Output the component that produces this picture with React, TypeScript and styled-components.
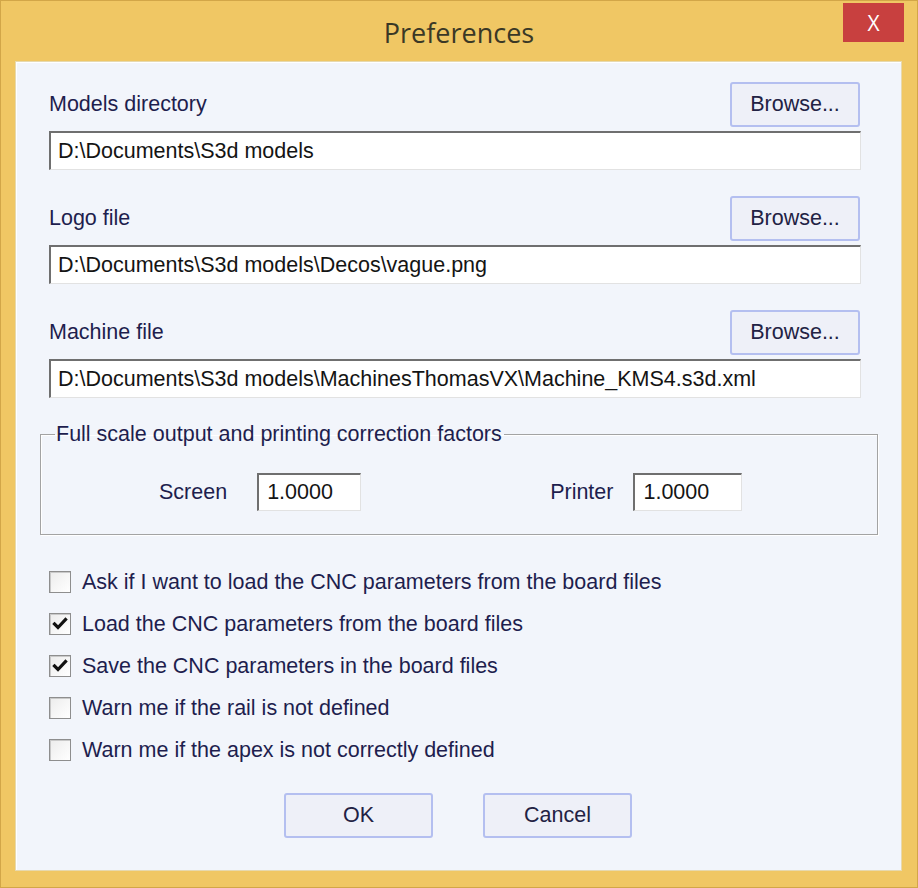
import React from 'react';
import styled, { createGlobalStyle } from 'styled-components';

const GlobalStyle = createGlobalStyle`
  html, body {
    margin: 0;
    padding: 0;
    background: #f0c764;
  }
  * {
    box-sizing: border-box;
  }
`;

const uiFont = `"Liberation Sans", Arial, sans-serif`;

const Window = styled.div`
  width: 918px;
  height: 888px;
  display: flex;
  flex-direction: column;
  background: #f0c764;
  border: 1px solid #d2a648;
  position: relative;
`;

const TitleBar = styled.div`
  height: 60px;
  display: flex;
  align-items: center;
  justify-content: center;
  flex-shrink: 0;
`;

const Title = styled.div`
  font-family: "Open Sans", "Liberation Sans", sans-serif;
  font-size: 27px;
  color: #3a3826;
  padding-top: 2px;
`;

const CloseButton = styled.div`
  position: absolute;
  top: 2px;
  right: 13px;
  width: 61px;
  height: 39px;
  background: #c8403f;
  color: #ffffff;
  display: flex;
  align-items: center;
  justify-content: center;
  font-family: "Open Sans", "Liberation Sans", sans-serif;
  font-size: 21px;
`;

const Client = styled.div`
  flex: 1;
  margin: 0 15px 16px 14px;
  background: #f2f5fb;
  border: 1px solid #e7d9ae;
  box-shadow: inset 1px 1px 0 #ffffff;
  padding: 20px 23px 0 24px;
  display: flex;
  flex-direction: column;
`;

const FileSection = styled.div<{ $after: number }>`
  padding: 0 17px 0 9px;
  display: flex;
  flex-direction: column;
  margin-bottom: ${(p) => p.$after}px;
`;

const FileHeader = styled.div`
  display: flex;
  align-items: center;
  justify-content: space-between;
  margin-bottom: 4px;
`;

const Label = styled.span`
  font-family: ${uiFont};
  font-size: 21.5px;
  color: #1e1e4e;
`;

const PushButton = styled.button<{ $w: number }>`
  width: ${(p) => p.$w}px;
  height: 45px;
  border: 2px solid #b4bff0;
  border-radius: 3px;
  background: #eef0f8;
  font-family: ${uiFont};
  font-size: 21.5px;
  color: #222244;
  padding: 0;
  margin-right: 1px;
`;

const TextBox = styled.div<{ $w?: number }>`
  height: 39px;
  width: ${(p) => (p.$w ? `${p.$w}px` : 'auto')};
  background: #ffffff;
  border-top: 2px solid #6f6f6f;
  border-left: 2px solid #6f6f6f;
  border-right: 1px solid #e2e2e2;
  border-bottom: 1px solid #e2e2e2;
  padding: 0 0 0 7px;
  display: flex;
  align-items: center;
  font-family: ${uiFont};
  font-size: 21.5px;
  color: #141414;
  white-space: nowrap;
  overflow: hidden;
`;

const GroupBox = styled.fieldset`
  margin: 0;
  border: 1px solid #a3a3a3;
  box-shadow: inset 1px 1px 0 #ffffff, 1px 1px 0 #ffffff;
  padding: 27px 0 23px 14px;
`;

const Legend = styled.legend`
  font-family: ${uiFont};
  font-size: 21.5px;
  color: #1e1e4e;
  padding: 0 2px 0 1px;
  line-height: 24px;
`;

const FactorRow = styled.div`
  display: flex;
  align-items: center;
  padding-left: 104px;
`;

const FactorLabel = styled(Label)<{ $gap: number; $lead?: number }>`
  margin-left: ${(p) => p.$lead ?? 0}px;
  margin-right: ${(p) => p.$gap}px;
`;

const FactorBox = styled(TextBox)`
  height: 38px;
  padding-left: 8px;
`;

const Options = styled.div`
  margin-top: 26px;
  padding-left: 9px;
  display: flex;
  flex-direction: column;
`;

const OptionRow = styled.label`
  height: 42px;
  display: flex;
  align-items: center;
  gap: 11px;
`;

const Box = styled.span`
  width: 22px;
  height: 22px;
  background: linear-gradient(135deg, #ececec, #ffffff);
  border: 1px solid #8e8e8e;
  box-shadow: inset 1px 1px 0 #c9c9c9;
  display: flex;
  align-items: center;
  justify-content: center;
`;

const ButtonRow = styled.div`
  display: flex;
  justify-content: center;
  gap: 49px;
  margin-top: 22px;
  padding-right: 1px;
`;

const CheckMark = () => (
  <svg width="16" height="16" viewBox="0 0 16 16">
    <path d="M2.5 8 L6 11.5 L13.5 3.5" fill="none" stroke="#111" strokeWidth="3.2" strokeLinecap="square" />
  </svg>
);

const files = [
  { label: 'Models directory', value: 'D:\\Documents\\S3d models', after: 26 },
  { label: 'Logo file', value: 'D:\\Documents\\S3d models\\Decos\\vague.png', after: 26 },
  { label: 'Machine file', value: 'D:\\Documents\\S3d models\\MachinesThomasVX\\Machine_KMS4.s3d.xml', after: 24 },
];

const options = [
  { text: 'Ask if I want to load the CNC parameters from the board files', checked: false },
  { text: 'Load the CNC parameters from the board files', checked: true },
  { text: 'Save the CNC parameters in the board files', checked: true },
  { text: 'Warn me if the rail is not defined', checked: false },
  { text: 'Warn me if the apex is not correctly defined', checked: false },
];

export default function App() {
  return (
    <>
      <GlobalStyle />
      <Window>
        <TitleBar>
          <Title>Preferences</Title>
        </TitleBar>
        <CloseButton>X</CloseButton>
        <Client>
          {files.map((f) => (
            <FileSection key={f.label} $after={f.after}>
              <FileHeader>
                <Label>{f.label}</Label>
                <PushButton $w={130}>Browse...</PushButton>
              </FileHeader>
              <TextBox>{f.value}</TextBox>
            </FileSection>
          ))}
          <GroupBox>
            <Legend>Full scale output and printing correction factors</Legend>
            <FactorRow>
              <FactorLabel $gap={30}>Screen</FactorLabel>
              <FactorBox $w={104}>1.0000</FactorBox>
              <FactorLabel $gap={20} $lead={189}>Printer</FactorLabel>
              <FactorBox $w={109}>1.0000</FactorBox>
            </FactorRow>
          </GroupBox>
          <Options>
            {options.map((o) => (
              <OptionRow key={o.text}>
                <Box>{o.checked && <CheckMark />}</Box>
                <Label>{o.text}</Label>
              </OptionRow>
            ))}
          </Options>
          <ButtonRow>
            <PushButton $w={149}>OK</PushButton>
            <PushButton $w={149}>Cancel</PushButton>
          </ButtonRow>
        </Client>
      </Window>
    </>
  );
}
